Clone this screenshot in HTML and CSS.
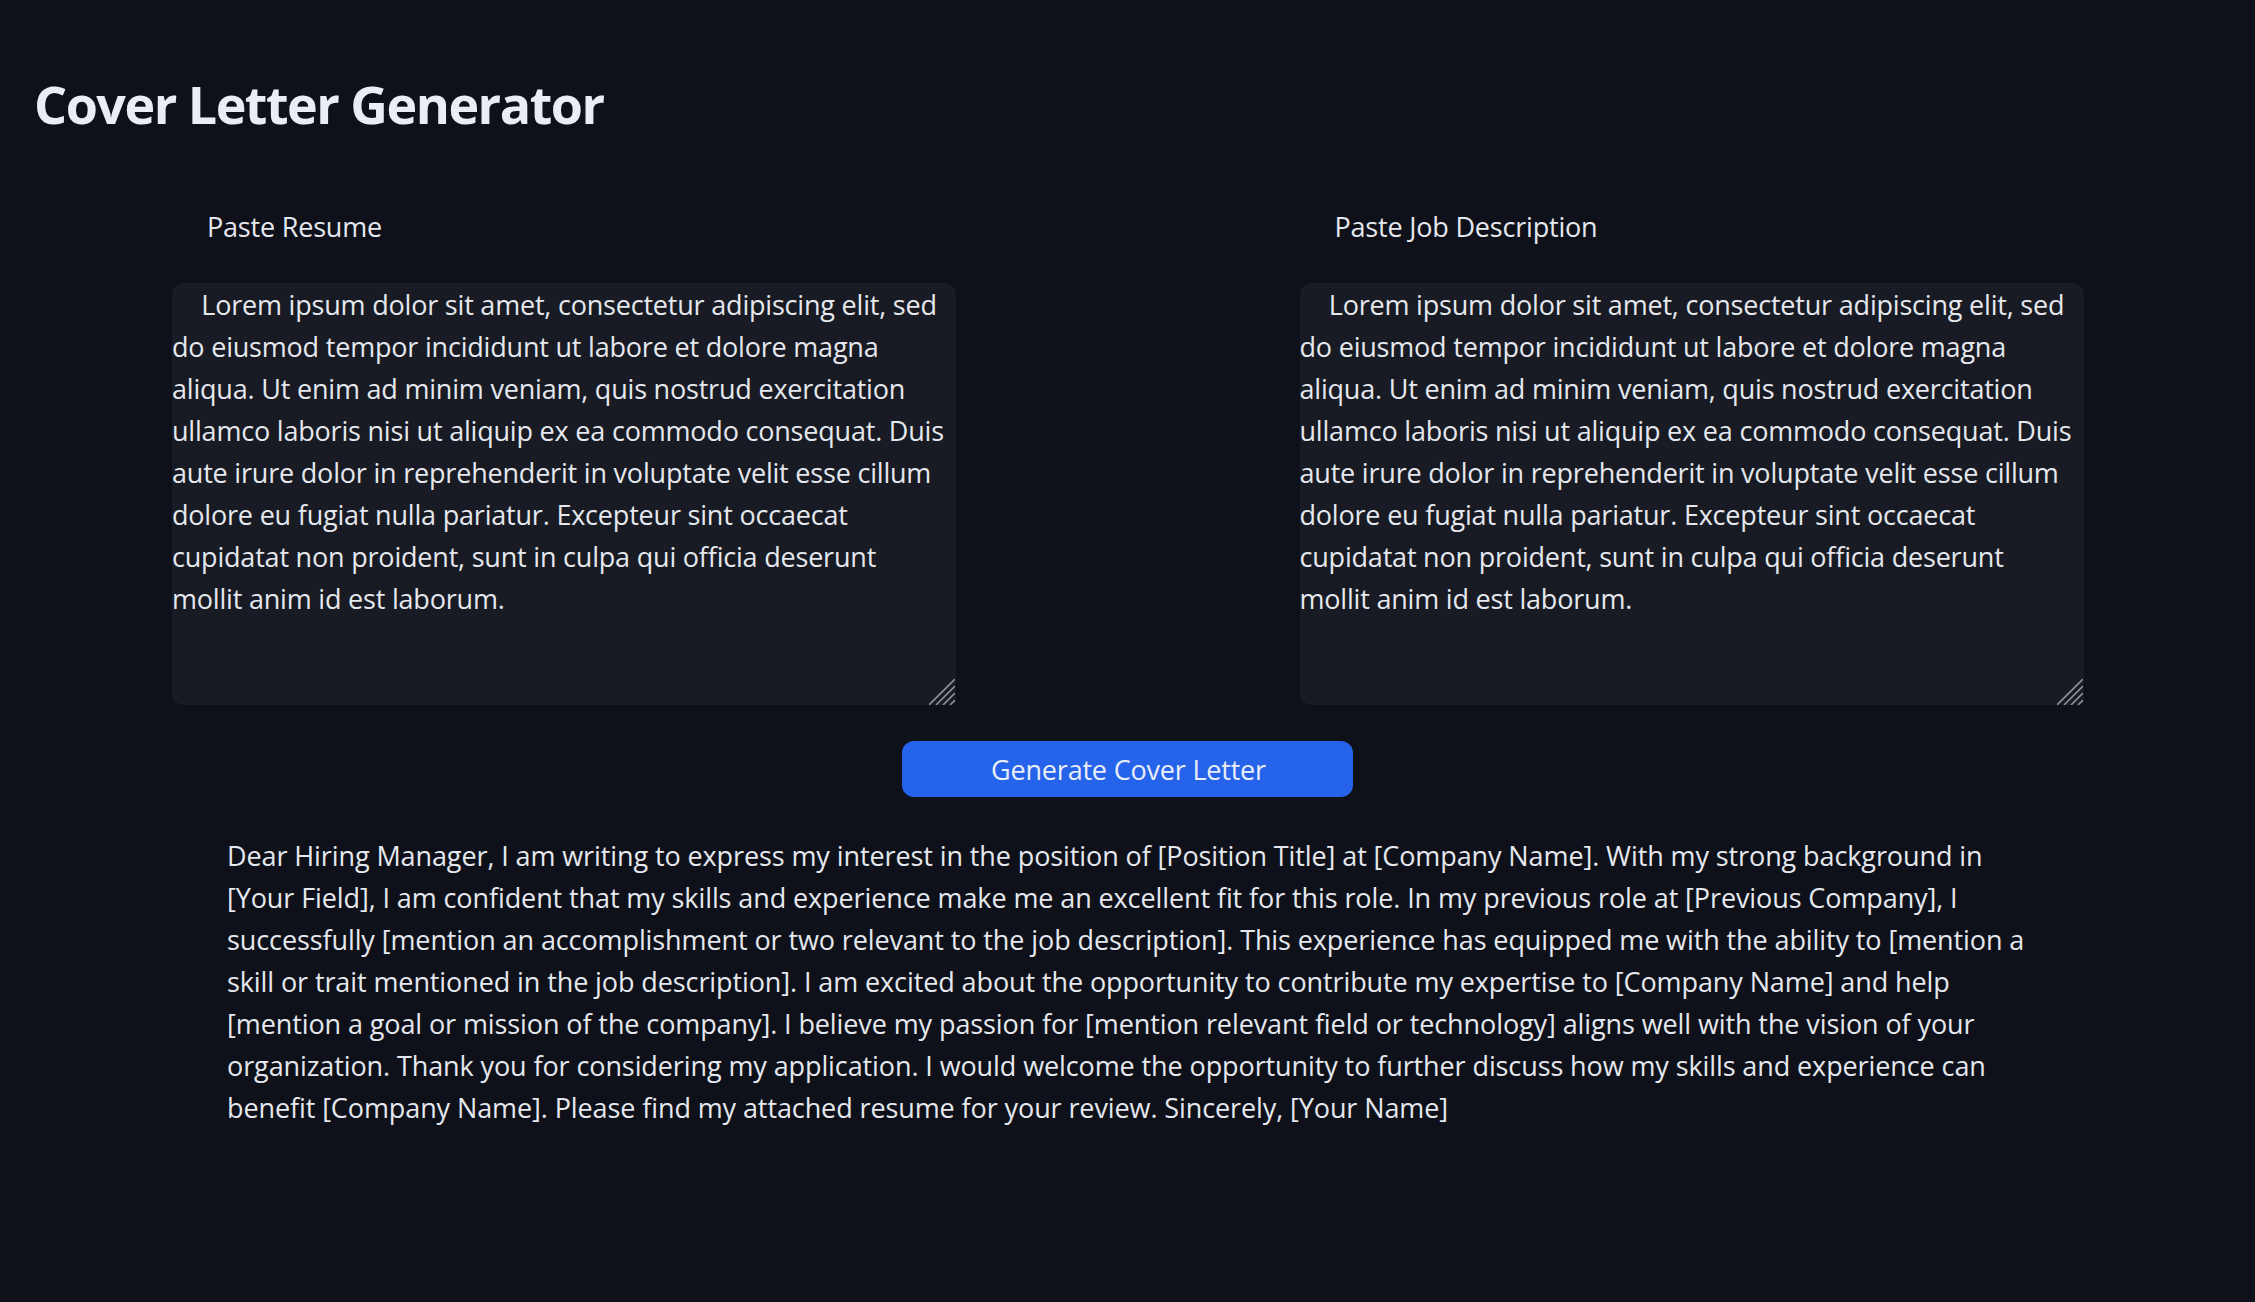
FILE: index.html
```html
<!DOCTYPE html>
<html lang="en">
<head>
<meta charset="utf-8">
<title>Cover Letter Generator</title>
<link rel="stylesheet" href="styles.css">
</head>
<body>
<div class="app">
  <h1 class="title">Cover Letter Generator</h1>
  <div class="inputs">
    <div class="field">
      <label class="field-label" for="resume">Paste Resume</label>
      <div class="input-wrap">
        <textarea id="resume" class="field-input" rows="10">    Lorem ipsum dolor sit amet, consectetur adipiscing elit, sed do eiusmod tempor incididunt ut labore et dolore magna aliqua. Ut enim ad minim veniam, quis nostrud exercitation ullamco laboris nisi ut aliquip ex ea commodo consequat. Duis aute irure dolor in reprehenderit in voluptate velit esse cillum dolore eu fugiat nulla pariatur. Excepteur sint occaecat cupidatat non proident, sunt in culpa qui officia deserunt mollit anim id est laborum.</textarea>
        <svg class="grip" width="26" height="26" viewBox="0 0 26 26" aria-hidden="true"><path d="M0 26L26 0M7 26L26 7M14 26L26 14M21 26L26 21"/></svg>
      </div>
    </div>
    <div class="field">
      <label class="field-label" for="job">Paste Job Description</label>
      <div class="input-wrap">
        <textarea id="job" class="field-input" rows="10">    Lorem ipsum dolor sit amet, consectetur adipiscing elit, sed do eiusmod tempor incididunt ut labore et dolore magna aliqua. Ut enim ad minim veniam, quis nostrud exercitation ullamco laboris nisi ut aliquip ex ea commodo consequat. Duis aute irure dolor in reprehenderit in voluptate velit esse cillum dolore eu fugiat nulla pariatur. Excepteur sint occaecat cupidatat non proident, sunt in culpa qui officia deserunt mollit anim id est laborum.</textarea>
        <svg class="grip" width="26" height="26" viewBox="0 0 26 26" aria-hidden="true"><path d="M0 26L26 0M7 26L26 7M14 26L26 14M21 26L26 21"/></svg>
      </div>
    </div>
  </div>
  <div class="actions">
    <button class="generate-btn" type="button">Generate Cover Letter</button>
  </div>
  <p class="letter">Dear Hiring Manager, I am writing to express my interest in the position of [Position Title] at [Company Name]. With my strong background in [Your Field], I am confident that my skills and experience make me an excellent fit for this role. In my previous role at [Previous Company], I successfully [mention an accomplishment or two relevant to the job description]. This experience has equipped me with the ability to [mention a skill or trait mentioned in the job description]. I am excited about the opportunity to contribute my expertise to [Company Name] and help [mention a goal or mission of the company]. I believe my passion for [mention relevant field or technology] aligns well with the vision of your organization. Thank you for considering my application. I would welcome the opportunity to further discuss how my skills and experience can benefit [Company Name]. Please find my attached resume for your review. Sincerely, [Your Name]</p>
</div>
</body>
</html>
```
FILE: styles.css
```css
html, body {
  margin: 0;
  padding: 0;
  background: #0e1119;
}
body {
  min-height: 1302px;
  font-family: "Open Sans", "Noto Sans", sans-serif;
  color: #e5e8ee;
}
.app {
  display: flex;
  flex-direction: column;
}
.title {
  margin: 0;
  padding: 74px 0 0 34px;
  font-size: 52px;
  line-height: 60px;
  font-weight: 700;
  letter-spacing: -1.5px;
  color: #e9eef6;
}
.inputs {
  display: grid;
  grid-template-columns: 1fr 1fr;
  margin-top: 72px;
}
.field {
  display: flex;
  flex-direction: column;
  align-items: flex-start;
  padding-left: 172px;
}
.field-label {
  padding-left: 35px;
  margin-bottom: 35px;
  font-size: 27px;
  line-height: 42px;
  letter-spacing: -0.2px;
  color: #e5e8ee;
}
.input-wrap {
  position: relative;
  width: 784px;
  height: 422px;
}
.field-input {
  display: block;
  box-sizing: border-box;
  width: 784px;
  height: 422px;
  margin: 0;
  padding: 1px 8px 0 0;
  border: 0;
  border-radius: 12px 12px 3px 12px;
  outline: none;
  background: #181b23;
  color: #e5e8ee;
  font-family: "Open Sans", "Noto Sans", sans-serif;
  font-size: 27px;
  line-height: 42px;
  letter-spacing: -0.2px;
  text-indent: 2px;
  resize: none;
  overflow: hidden;
}
.grip {
  position: absolute;
  right: 1px;
  bottom: 0;
  fill: none;
  stroke: #8e9095;
  stroke-width: 1.6;
  pointer-events: none;
}
.actions {
  display: flex;
  justify-content: center;
  margin-top: 36px;
}
.generate-btn {
  width: 451px;
  height: 56px;
  padding: 2px 0 0 2px;
  border: 0;
  border-radius: 12px;
  background: #2563eb;
  color: #e9eef6;
  font-family: "Open Sans", "Noto Sans", sans-serif;
  font-size: 27px;
  line-height: 42px;
  letter-spacing: -0.2px;
  cursor: pointer;
}
.letter {
  box-sizing: border-box;
  width: 1801px;
  margin: 38px auto 0;
  font-size: 27px;
  line-height: 42px;
  letter-spacing: -0.1px;
  color: #e5e8ee;
}
```
